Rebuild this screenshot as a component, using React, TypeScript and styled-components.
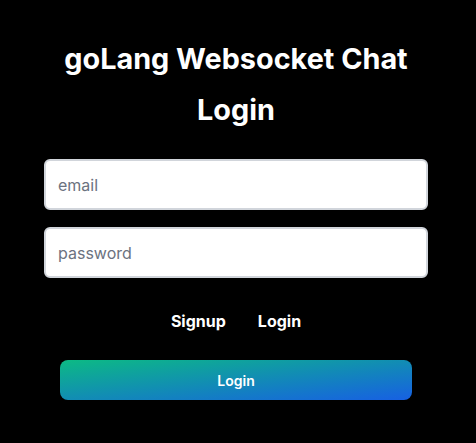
import React from "react";
import styled, { createGlobalStyle } from "styled-components";

const Global = createGlobalStyle`
  html, body { margin: 0; padding: 0; background: #000; }
  body { font-family: Inter, "Noto Sans", sans-serif; color: #fff; }
  * { box-sizing: border-box; }
`;

const Page = styled.div`
  width: 476px;
  min-height: 443px;
  background: #000;
  padding: 40px 0 0 44px;
`;

const Column = styled.div`
  width: 384px;
  display: flex;
  flex-direction: column;
`;

const Title = styled.h1`
  margin: 0;
  font-size: 28.8px;
  font-weight: 700;
  line-height: 38px;
  text-align: center;
  color: #fff;
  white-space: nowrap;
`;

const SubTitle = styled(Title)`
  margin-top: 13px;
`;

const Form = styled.form`
  display: flex;
  flex-direction: column;
  gap: 17px;
  margin-top: 30px;
`;

const Input = styled.input`
  width: 100%;
  height: 51px;
  border: 2px solid #d1d5db;
  border-radius: 6px;
  background: #fff;
  padding: 0 12px;
  font-family: inherit;
  font-size: 16px;
  color: #111827;
  outline: none;
  &::placeholder { color: #6b7280; }
`;

const Tabs = styled.div`
  display: flex;
  justify-content: center;
  gap: 32px;
  margin-top: 32px;
`;

const Tab = styled.span`
  font-size: 16px;
  font-weight: 700;
  color: #fff;
  line-height: 22px;
`;

const Button = styled.button`
  margin: 28px 16px 0;
  height: 40px;
  border: none;
  border-radius: 8px;
  background: linear-gradient(to bottom right, #0cba84, #1760e3);
  color: #fff;
  font-family: inherit;
  font-size: 14px;
  font-weight: 600;
  cursor: pointer;
`;

export default function App() {
  return (
    <>
      <Global />
      <Page>
        <Column>
          <Title>goLang Websocket Chat</Title>
          <SubTitle>Login</SubTitle>
          <Form onSubmit={(e) => e.preventDefault()}>
            <Input type="email" placeholder="email" />
            <Input type="password" placeholder="password" />
          </Form>
          <Tabs>
            <Tab>Signup</Tab>
            <Tab>Login</Tab>
          </Tabs>
          <Button type="button">Login</Button>
        </Column>
      </Page>
    </>
  );
}
